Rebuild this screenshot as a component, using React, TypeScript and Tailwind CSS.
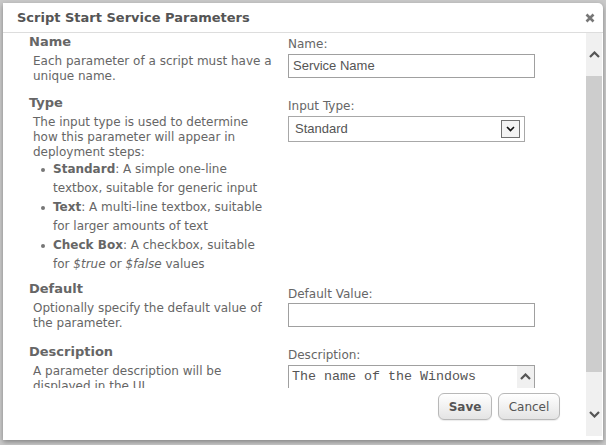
import React from "react";

function ChevronUp({ className = "" }: { className?: string }) {
  return (
    <svg width="11" height="7" viewBox="0 0 11 7" className={className}>
      <path d="M1 6 L5.5 1.5 L10 6" fill="none" stroke="#555" strokeWidth="2.2" />
    </svg>
  );
}
function ChevronDown({ className = "" }: { className?: string }) {
  return (
    <svg width="11" height="7" viewBox="0 0 11 7" className={className}>
      <path d="M1 1 L5.5 5.5 L10 1" fill="none" stroke="#555" strokeWidth="2.2" />
    </svg>
  );
}

function Bullet({ children }: { children: React.ReactNode }) {
  return (
    <li className="flex">
      <span className="w-[20px] shrink-0 flex justify-center pt-[8px]">
        <span className="w-[4px] h-[4px] rounded-full bg-[#777777]" />
      </span>
      <span className="flex-1">{children}</span>
    </li>
  );
}

export default function App() {
  return (
    <div className="w-[606px] h-[445px] bg-[#c9c9c9] pt-[3px] pl-[3px] overflow-hidden font-['DejaVu_Sans',sans-serif]">
      <div className="w-[600px] h-[437px] bg-white rounded-tr-[5px] shadow-[0_2px_5px_rgba(0,0,0,0.35)] flex flex-col">
        {/* Title bar */}
        <div className="h-[30px] border-b border-[#dddddd] flex items-center justify-between pl-[14px] pr-[8px] shrink-0">
          <span className="text-[13px] font-bold text-[#555555] leading-[16px]">Script Start Service Parameters</span>
          <svg width="10" height="10" viewBox="0 0 10 10">
            <path d="M1.5 1.5 L8.5 8.5 M8.5 1.5 L1.5 8.5" stroke="#777" strokeWidth="2.6" />
          </svg>
        </div>
        {/* Body */}
        <div className="flex flex-1 min-h-0">
          <div className="flex-1 flex flex-col min-w-0">
            <div className="h-[355px] overflow-hidden text-[#666666]">
              {/* Row Name */}
              <div className="flex pt-[1px]">
                <div className="w-[285px] pl-[26px] pr-[13px] shrink-0">
                  <div className="text-[13px] font-bold leading-[16px]">Name</div>
                  <div className="pl-[4px] mt-[4px] text-[12px] leading-[15px]">
                    Each parameter of a script must have a unique name.
                  </div>
                </div>
                <div className="mt-[2px]">
                  <div className="text-[12px] leading-[16px]">Name:</div>
                  <div className="mt-[2px] w-[247px] h-[24px] border border-[#a0a0a0] flex items-center pl-[4px] font-['Liberation_Sans',Arial,sans-serif] text-[13px] text-[#555555]">
                    Service Name
                  </div>
                </div>
              </div>
              {/* Row Type */}
              <div className="flex mt-[11px]">
                <div className="w-[285px] pl-[26px] pr-[13px] shrink-0">
                  <div className="text-[13px] font-bold leading-[16px]">Type</div>
                  <div className="pl-[4px] mt-[4px] text-[12px] leading-[15px]">
                    The input type is used to determine how this parameter will appear in deployment steps:
                  </div>
                  <ul className="text-[12px] leading-[19px] pl-[4px]">
                    <Bullet>
                      <b>Standard</b>: A simple one-line textbox, suitable for generic input
                    </Bullet>
                    <Bullet>
                      <b>Text</b>: A multi-line textbox, suitable for larger amounts of text
                    </Bullet>
                    <Bullet>
                      <b>Check Box</b>: A checkbox, suitable for <i>$true</i> or <i>$false</i> values
                    </Bullet>
                  </ul>
                </div>
                <div className="mt-[3px]">
                  <div className="text-[12px] leading-[16px]">Input Type:</div>
                  <div className="mt-[2px] w-[237px] h-[26px] border border-[#a8a8a8] flex items-center justify-between pl-[6px] pr-[4px] font-['Liberation_Sans',Arial,sans-serif] text-[13px] text-[#555555]">
                    <span>Standard</span>
                    <div className="w-[19px] h-[18px] border border-[#707070] bg-[#f3f3f3] flex items-center justify-center">
                      <svg width="9" height="6" viewBox="0 0 9 6">
                        <path d="M1 1 L4.5 4.5 L8 1" fill="none" stroke="#111" strokeWidth="1.6" />
                      </svg>
                    </div>
                  </div>
                </div>
              </div>
              {/* Row Default */}
              <div className="flex mt-[7px]">
                <div className="w-[285px] pl-[26px] pr-[13px] shrink-0">
                  <div className="text-[13px] font-bold leading-[16px]">Default</div>
                  <div className="pl-[4px] mt-[4px] text-[12px] leading-[15px]">
                    Optionally specify the default value of the parameter.
                  </div>
                </div>
                <div className="mt-[5px]">
                  <div className="text-[12px] leading-[16px]">Default Value:</div>
                  <div className="mt-[1px] w-[247px] h-[24px] border border-[#a0a0a0]" />
                </div>
              </div>
              {/* Row Description */}
              <div className="flex mt-[13px]">
                <div className="w-[285px] pl-[26px] pr-[13px] shrink-0">
                  <div className="text-[13px] font-bold leading-[16px]">Description</div>
                  <div className="pl-[4px] mt-[4px] text-[12px] leading-[15px]">
                    A parameter description will be displayed in the UI.
                  </div>
                </div>
                <div className="mt-[3px]">
                  <div className="text-[12px] leading-[16px]">Description:</div>
                  <div className="mt-[2px] w-[247px] h-[60px] border border-[#a0a0a0] flex">
                    <div className="flex-1 pl-[3px] pt-[1px] font-['Liberation_Mono','Courier_New',monospace] text-[13.33px] leading-[20px] text-[#555555]">
                      The name of the Windows service
                    </div>
                    <div className="w-[17px] bg-[#f0f0f0] flex flex-col">
                      <div className="h-[21px] flex items-center justify-center">
                        <ChevronUp />
                      </div>
                    </div>
                  </div>
                </div>
              </div>
            </div>
            {/* Footer */}
            <div className="flex justify-end gap-[6px] pt-[5px] pr-[26px]">
              <button className="w-[54px] h-[27px] rounded-[6px] border border-[#b8b8b8] bg-gradient-to-b from-[#ffffff] to-[#e4e4e4] text-[12px] font-bold text-[#555555] shadow-[0_1px_1px_rgba(0,0,0,0.08)]">
                Save
              </button>
              <button className="w-[62px] h-[27px] rounded-[6px] border border-[#b8b8b8] bg-gradient-to-b from-[#ffffff] to-[#e4e4e4] text-[12px] text-[#555555] shadow-[0_1px_1px_rgba(0,0,0,0.08)]">
                Cancel
              </button>
            </div>
          </div>
          {/* Scrollbar */}
          <div className="w-[16px] mr-[1px] mb-[4px] flex flex-col bg-[#f0f0f0]">
            <div className="h-[43px] flex items-center justify-center">
              <ChevronUp />
            </div>
            <div className="h-[296px] bg-[#cdcdcd]" />
            <div className="flex-1" />
            <div className="h-[43px] flex items-center justify-center">
              <ChevronDown />
            </div>
          </div>
        </div>
      </div>
    </div>
  );
}
